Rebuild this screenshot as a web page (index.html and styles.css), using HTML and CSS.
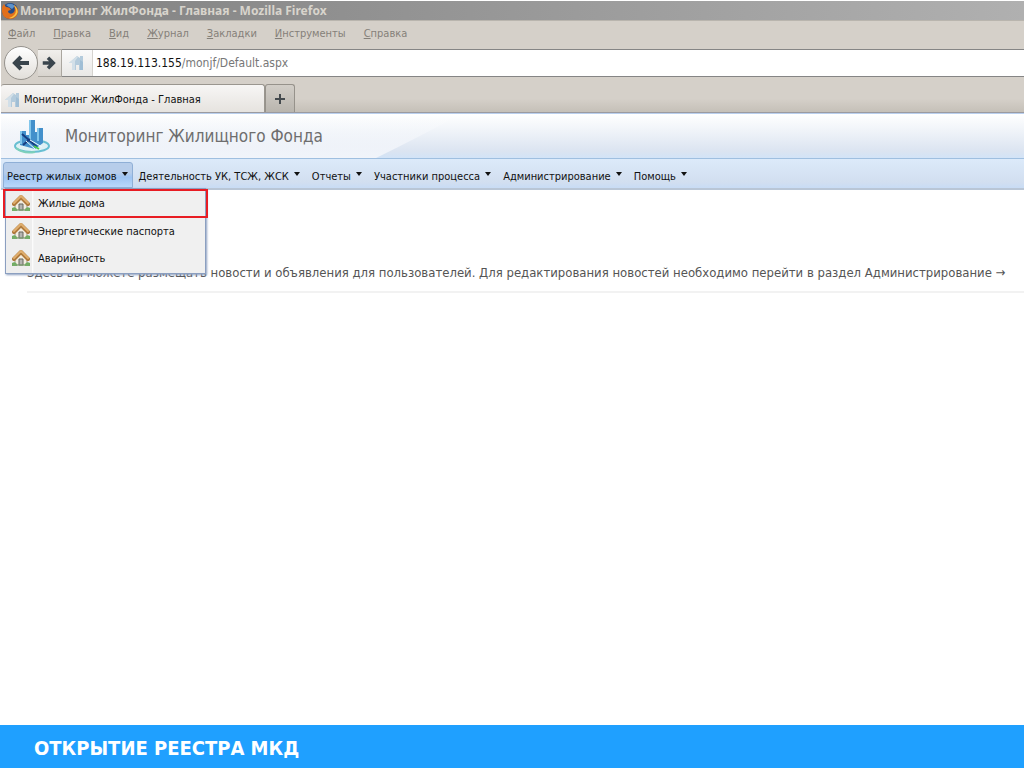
FILE: index.html
```html
<!DOCTYPE html>
<html lang="ru">
<head>
  <meta charset="UTF-8" />
  <meta name="viewport" content="width=device-width, initial-scale=1.0"/>
  <title>Мониторинг ЖилФонда - Главная</title>
  <link rel="stylesheet" href="styles.css">
</head>
<body>
  <!-- shared icons -->
  <svg class="sprite" aria-hidden="true">
    <symbol id="favicon" viewBox="0 0 16 18">
      <path d="M0 9 L8 2 L11 4 V2 H14 V16 H10 V11 H7 V16 H3 V9 Z" fill="#b4cbdc"/>
      <path d="M0 9 L8 2 L9 3 L6 7 V16 H3 V9 Z" fill="#d2dfe8"/>
      <path d="M11 6 L14 8 V16 H11 Z" fill="#a0bed5"/>
    </symbol>
    <symbol id="house" viewBox="0 0 18 18">
      <path d="M3 9 L9 4 L15 9 V16 H3 Z" fill="#f3eee2" stroke="#9a958a"/>
      <path d="M7 10 H11 V16 H7 Z" fill="#b5b5b2" stroke="#66665f"/>
      <path d="M0 14 Q3 12 5 15 V17 H0 Z M18 14 Q15 12 13 15 V17 H18 Z" fill="#6fae62"/>
      <path d="M1 16 H17" stroke="#7fa972"/>
      <path d="M2 10 L9 3 L16 10" fill="none" stroke="#b07a3c" stroke-width="4" stroke-linecap="round" stroke-linejoin="round"/>
      <path d="M2 9 L9 2 L16 9" fill="none" stroke="#dfae6e" stroke-width="2" stroke-linecap="round" stroke-linejoin="round"/>
    </symbol>
  </svg>

  <header class="browser">
    <div class="title-bar">
      <svg class="firefox" viewBox="0 0 18 18" aria-hidden="true">
        <circle cx="9" cy="9" r="8" fill="#234a86"/>
        <path d="M5 3 Q10 0 14 4 L11 7 L8 5 Z" fill="#5d93cc"/>
        <path d="M1 5 L3 2 L5 5 Q9 5 10 8 Q7 8 7 10 Q9 13 12 11 Q15 9 13 3 Q18 6 17 11 Q15 17 9 17 Q2 17 1 10 Z" fill="#e2701c"/>
        <path d="M13 3 Q18 7 16 12 Q13 17 8 16 Q15 14 15 8 Z" fill="#f7c443"/>
      </svg>
      <span>Мониторинг ЖилФонда - Главная - Mozilla Firefox</span>
    </div>
    <nav class="browser-menu">
      <a href="#"><u>Ф</u>айл</a>
      <a href="#"><u>П</u>равка</a>
      <a href="#"><u>В</u>ид</a>
      <a href="#"><u>Ж</u>урнал</a>
      <a href="#"><u>З</u>акладки</a>
      <a href="#"><u>И</u>нструменты</a>
      <a href="#"><u>С</u>правка</a>
    </nav>
    <div class="address-row">
      <button class="back" type="button" aria-label="Назад">
        <svg viewBox="0 0 18 16"><path d="M9 2 L3 8 L9 14 M4 8 H17" /></svg>
      </button>
      <button class="forward" type="button" aria-label="Вперед">
        <svg viewBox="0 0 18 16"><path d="M9 2 L15 8 L9 14 M14 8 H3" /></svg>
      </button>
      <div class="address">
        <span class="site-id"><svg><use href="#favicon"/></svg></span>
        <div class="url" role="textbox" aria-label="Адрес" contenteditable="true" spellcheck="false"><b>188.19.113.155</b>/monjf/Default.aspx</div>
      </div>
    </div>
    <div class="tabs">
      <button class="tab" type="button">
        <svg><use href="#favicon"/></svg>
        <span>Мониторинг ЖилФонда - Главная</span>
      </button>
      <button class="new-tab" type="button" aria-label="Новая вкладка">
        <svg viewBox="0 0 12 12"><path d="M6 1 V11 M1 6 H11"/></svg>
      </button>
    </div>
  </header>

  <div class="app-header">
    <svg class="swoosh" viewBox="0 0 460 44" aria-hidden="true">
      <defs>
        <linearGradient id="shine" x1="0" y1="0" x2="0" y2="1">
          <stop offset="0" stop-color="#fff" stop-opacity="0"/>
          <stop offset="1" stop-color="#f1f4fa"/>
        </linearGradient>
      </defs>
      <path d="M0 0 H460 Q420 22 375 44 H0 Z" fill="url(#shine)"/>
    </svg>
    <svg class="logo" viewBox="0 0 38 36" aria-hidden="true">
      <ellipse cx="19" cy="28" rx="17" ry="6" fill="#dff1f5" stroke="#68bfd2" stroke-width="2"/>
      <path d="M3 30 Q10 36 22 34" fill="none" stroke="#7ed0bb" stroke-width="2"/>
      <path d="M7 13 H13 V17 H16 V2 H22 V14 H24 V10 H30 V25 L22 31 L7 27 Z" fill="#4390cb"/>
      <path d="M7 13 H9 V26 H7 Z M16 2 H18 V23 H16 Z M24 10 H26 V23 H24 Z" fill="#82c6eb"/>
      <path d="M9 16 L24 29 M10 27 L17 21" stroke="#173d80" stroke-width="2"/>
      <path d="M17 22 L29 29 M13 23 L22 31" stroke="#effbff"/>
      <path d="M21 28 L26 31" stroke="#4fcf4c" stroke-width="2"/>
    </svg>
    <h1>Мониторинг Жилищного Фонда</h1>
  </div>

  <nav class="app-menu">
    <div class="menu-item">
      <button class="active" type="button">Реестр жилых домов</button>
      <div class="dropdown">
        <a class="selected" href="#"><svg><use href="#house"/></svg><span>Жилые дома</span></a>
        <a href="#"><svg><use href="#house"/></svg><span>Энергетические паспорта</span></a>
        <a href="#"><svg><use href="#house"/></svg><span>Аварийность</span></a>
      </div>
    </div>
    <button type="button">Деятельность УК, ТСЖ, ЖСК</button>
    <button type="button">Отчеты</button>
    <button type="button">Участники процесса</button>
    <button type="button">Администрирование</button>
    <button type="button">Помощь</button>
  </nav>

  <main>
    <p class="news">Здесь вы можете размещать новости и объявления для пользователей. Для редактирования новостей необходимо перейти в раздел Администрирование →</p>
  </main>

  <footer>
    <h2>ОТКРЫТИЕ РЕЕСТРА МКД</h2>
  </footer>
</body>
</html>
```
FILE: styles.css
```css
* {
  box-sizing: border-box;
  margin: 0;
  padding: 0;
}

body {
  min-height: 100vh;
  display: flex;
  flex-direction: column;
  background: #fff;
  color: #111;
  font-family: 'DejaVu Sans Condensed', 'DejaVu Sans', sans-serif;
  font-size: 11px;
}

a {
  color: inherit;
  text-decoration: none;
}

button {
  border: none;
  background: none;
  color: inherit;
  font: inherit;
  cursor: pointer;
}

.sprite {
  display: none;
}

/* browser window */
.browser {
  margin: 1px 0 0 1px;
  background: #d5d0c9;
}

.title-bar {
  display: flex;
  align-items: center;
  gap: 1px;
  height: 20px;
  background: linear-gradient(90deg, #808080, #b0b0b0);
  border-bottom: 1px solid #b9b5ae;
  color: #d8d4cc;
  font-family: 'Noto Sans', sans-serif;
  font-size: 12px;
  font-weight: bold;
  white-space: nowrap;
}

.firefox {
  width: 18px;
  height: 18px;
}

.browser-menu {
  display: flex;
  align-items: center;
  gap: 18px;
  height: 25px;
  padding-left: 7px;
  color: #858079;
}

.address-row {
  display: flex;
  align-items: center;
  height: 33px;
  padding-left: 3px;
}

.address-row button {
  display: flex;
  align-items: center;
  justify-content: center;
  flex-shrink: 0;
}

.address-row button svg {
  width: 18px;
  height: 16px;
  fill: none;
  stroke: #3a454d;
  stroke-width: 4;
}

.address-row .back {
  width: 34px;
  height: 34px;
  border: 1px solid #96938e;
  border-radius: 50%;
  background: linear-gradient(#fff, #e2dfda);
}

.address-row .forward {
  width: 24px;
  height: 28px;
  padding-right: 4px;
  border: 1px solid #aaa69f;
  border-left: none;
  background: linear-gradient(#f1efec, #d8d4ce);
}

.address-row .forward svg {
  width: 16px;
  height: 14px;
}

.address {
  flex: 1;
  display: flex;
  align-items: center;
  height: 28px;
  background: #fff;
  border: solid #858585;
  border-width: 1px 0;
}

.site-id {
  display: flex;
  align-items: center;
  justify-content: center;
  width: 31px;
  height: 26px;
  background: linear-gradient(#fafafa, #e9e8e6);
  border-right: 1px solid #d5d3cf;
}

.site-id svg,
.tab svg {
  width: 16px;
  height: 18px;
  flex-shrink: 0;
}

.url {
  padding-left: 3px;
  color: #777;
  font-size: 12px;
  outline: none;
}

.url b {
  color: #111;
  font-weight: normal;
}

.tabs {
  display: flex;
  align-items: flex-end;
  height: 34px;
  background: linear-gradient(#d5d0c9 60%, #c5c0b8);
  border-bottom: 1px solid #9b9aa0;
}

.tab {
  display: flex;
  align-items: center;
  gap: 3px;
  width: 264px;
  height: 28px;
  padding: 2px 0 0 4px;
  background: linear-gradient(#f7f6f5, #e6e3df);
  border: 1px solid #9a968f;
  border-width: 1px 1px 0 0;
  border-radius: 3px 3px 0 0;
  white-space: nowrap;
}

.new-tab {
  display: flex;
  align-items: center;
  justify-content: center;
  width: 30px;
  height: 28px;
  background: linear-gradient(#d2cec8, #b9b5ae);
  border: 1px solid #96928b;
  border-bottom: none;
  border-radius: 3px 3px 0 0;
}

.new-tab svg {
  width: 12px;
  height: 12px;
  stroke: #444a4e;
  stroke-width: 2;
}

/* application */
.app-header {
  position: relative;
  display: flex;
  align-items: center;
  gap: 14px;
  height: 46px;
  margin-left: 1px;
  padding-left: 12px;
  background: linear-gradient(#fff, #f3f6fa 30%, #dbe4f1 85%, #d2e3f7);
  border-top: 1px solid #b9cfee;
  border-bottom: 1px solid #9fbfe0;
}

.swoosh {
  position: absolute;
  top: 0;
  left: 0;
  width: 460px;
  height: 44px;
}

.logo {
  position: relative;
  width: 38px;
  height: 36px;
}

h1 {
  position: relative;
  color: #6e6e6e;
  font-size: 17px;
  font-weight: normal;
}

.app-menu {
  display: flex;
  align-items: center;
  height: 31px;
  margin-left: 1px;
  padding: 2px 0 0 2px;
  background: linear-gradient(#dceafa, #d2dff0 80%, #c8dcf5);
  border-bottom: 2px solid #b9c6d6;
}

.menu-item {
  position: relative;
}

.app-menu button {
  display: flex;
  align-items: center;
  gap: 5px;
  height: 26px;
  padding: 3px 6px 0;
  white-space: nowrap;
}

.app-menu button::after {
  content: '';
  margin-bottom: 4px;
  border: 3px solid transparent;
  border-top: 4px solid #111;
  border-bottom: none;
}

.app-menu .active {
  padding: 3px 4px 0 3px;
  background: linear-gradient(#b7cdea 40%, #9ec4f2 60%, #b9d8fa);
  border: 1px solid #8fafd6;
  border-radius: 3px 3px 0 0;
}

.dropdown {
  position: absolute;
  top: 100%;
  left: 2px;
  z-index: 1;
  width: 201px;
  padding-bottom: 1px;
  background: linear-gradient(90deg, #eee 26px, #fff 26px, #f0f0f0 28px);
  border: 1px solid #8b9fc0;
  box-shadow: 1px 1px 2px #8b9fc0;
}

.dropdown a {
  display: flex;
  align-items: center;
  gap: 8px;
  height: 27px;
  padding-left: 6px;
}

.dropdown .selected {
  height: 29px;
  margin: 0 -3px;
  padding-left: 7px;
  border: 2px solid #e81c23;
}

.dropdown svg {
  width: 18px;
  height: 18px;
}

main {
  flex: 1;
  padding: 73px 0 0 27px;
}

.news {
  padding-bottom: 8px;
  border-bottom: 2px solid #f2f2f2;
  color: #555;
  font-size: 13px;
  line-height: 20px;
  white-space: nowrap;
}

footer {
  display: flex;
  align-items: center;
  height: 43px;
  padding: 3px 34px 0;
  background: #1fa0ff;
  color: #fff;
}

h2 {
  font-size: 20px;
}
```
